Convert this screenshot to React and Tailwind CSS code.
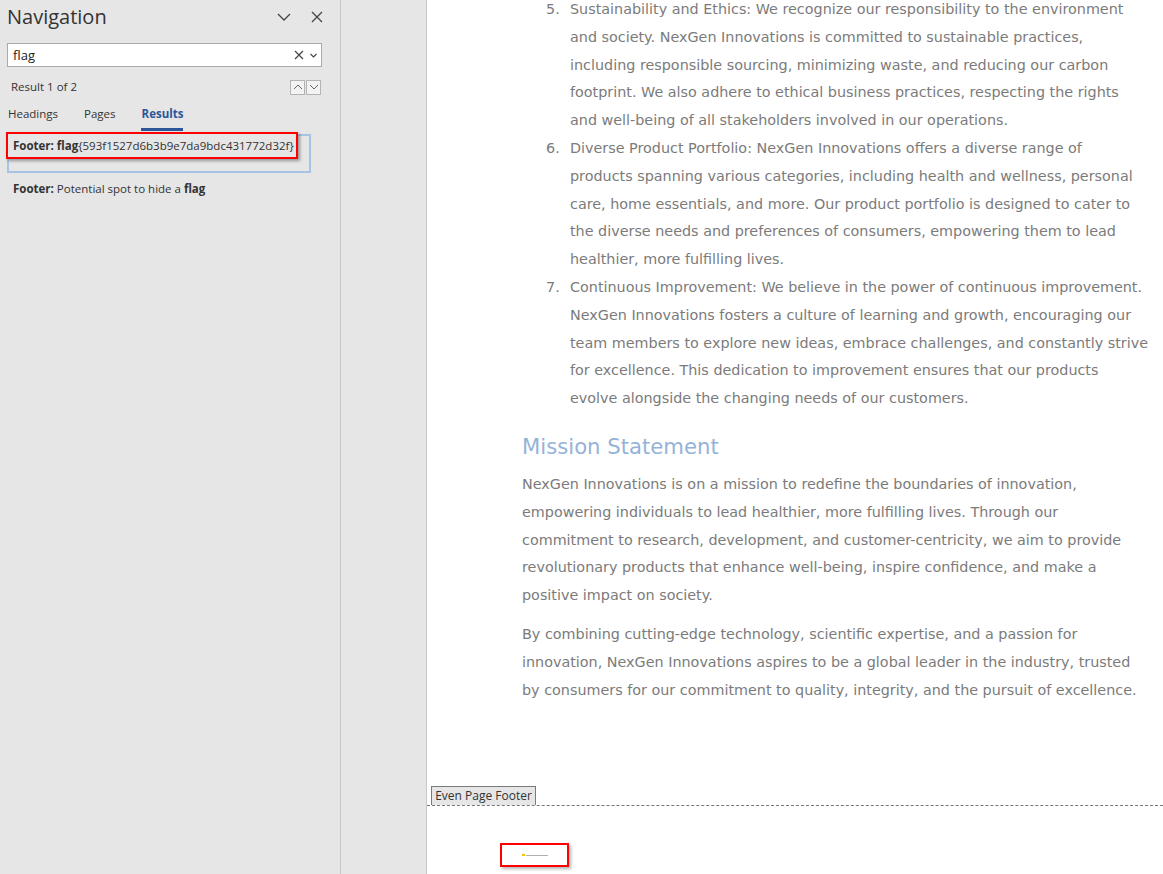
import React from "react";

const docFont = { fontFamily: '"DejaVu Sans", Verdana, sans-serif' };
const uiFont = { fontFamily: '"Open Sans", "Noto Sans", sans-serif' };

function Lines({ lines }) {
  return lines.map((l, i) => (
    <div key={i} className="h-[27.8px] leading-[27.8px] whitespace-nowrap">
      {l}
    </div>
  ));
}

const items = [
  {
    n: "5.",
    lines: [
      "Sustainability and Ethics: We recognize our responsibility to the environment",
      "and society. NexGen Innovations is committed to sustainable practices,",
      "including responsible sourcing, minimizing waste, and reducing our carbon",
      "footprint. We also adhere to ethical business practices, respecting the rights",
      "and well-being of all stakeholders involved in our operations.",
    ],
  },
  {
    n: "6.",
    lines: [
      "Diverse Product Portfolio: NexGen Innovations offers a diverse range of",
      "products spanning various categories, including health and wellness, personal",
      "care, home essentials, and more. Our product portfolio is designed to cater to",
      "the diverse needs and preferences of consumers, empowering them to lead",
      "healthier, more fulfilling lives.",
    ],
  },
  {
    n: "7.",
    lines: [
      "Continuous Improvement: We believe in the power of continuous improvement.",
      "NexGen Innovations fosters a culture of learning and growth, encouraging our",
      "team members to explore new ideas, embrace challenges, and constantly strive",
      "for excellence. This dedication to improvement ensures that our products",
      "evolve alongside the changing needs of our customers.",
    ],
  },
];

export default function App() {
  return (
    <div className="flex h-[874px] w-[1163px] overflow-hidden bg-[#e6e6e6]">
      {/* Navigation pane */}
      <div
        className="relative w-[341px] shrink-0 border-r border-[#c8c8c8] bg-[#e6e6e6] text-[#333]"
        style={uiFont}
      >
        <div className="flex h-[34px] items-center pl-[7px] pr-[17px]">
          <div className="flex-1 text-[20px] leading-none text-[#333]">Navigation</div>
          <svg width="14" height="10" viewBox="0 0 14 10" className="mr-[20px]">
            <path d="M1 2 L7 8 L13 2" stroke="#444" strokeWidth="1.3" fill="none" />
          </svg>
          <svg width="12" height="12" viewBox="0 0 12 12">
            <path d="M1 1 L11 11 M11 1 L1 11" stroke="#444" strokeWidth="1.3" />
          </svg>
        </div>
        <div className="mx-[7px] mt-[9px] flex h-[24px] w-[315px] items-center border border-[#ababab] bg-white pl-[5px] pr-[3px]">
          <div className="flex-1 text-[13px] leading-none text-[#222]">flag</div>
          <svg width="10" height="10" viewBox="0 0 10 10" className="mr-[6px]">
            <path d="M1 1 L9 9 M9 1 L1 9" stroke="#444" strokeWidth="1.2" />
          </svg>
          <svg width="7" height="5" viewBox="0 0 7 5" className="mr-[1px]">
            <path d="M0.5 1 L3.5 4 L6.5 1" stroke="#444" strokeWidth="1.1" fill="none" />
          </svg>
        </div>
        <div className="mt-[12px] flex h-[16px] items-center pl-[11px] pr-[19px]">
          <div className="flex-1 text-[11.5px] leading-none text-[#333]">Result 1 of 2</div>
          <div className="mr-[1px] flex h-[15px] w-[15px] items-center justify-center border border-[#b4b4b4] bg-[#f3f3f3]">
            <svg width="10" height="6" viewBox="0 0 10 6">
              <path d="M1 5 L5 1 L9 5" stroke="#666" strokeWidth="1" fill="none" />
            </svg>
          </div>
          <div className="flex h-[15px] w-[15px] items-center justify-center border border-[#b4b4b4] bg-[#f3f3f3]">
            <svg width="10" height="6" viewBox="0 0 10 6">
              <path d="M1 1 L5 5 L9 1" stroke="#666" strokeWidth="1" fill="none" />
            </svg>
          </div>
        </div>
        <div className="mt-[11px] flex h-[25px] items-start text-[11.5px] leading-[16px]">
          <div className="ml-[8px] text-[#333]">Headings</div>
          <div className="ml-[26px] text-[#333]">Pages</div>
          <div className="ml-[25px] flex flex-col items-center">
            <div className="px-[1px] font-bold text-[#2b579a]">Results</div>
            <div className="mt-[6px] h-[3px] w-[42px] bg-[#2b579a]"></div>
          </div>
        </div>
        <div className="mx-[7px] mt-[3px] h-[39px] w-[304px] border-2 border-[#a9c3e6] bg-[#e6e6e6]"></div>
        <div className="mt-[10px] whitespace-nowrap pl-[13px] text-[11.5px] leading-none text-[#333]">
          <span className="font-bold">Footer:</span> Potential spot to hide a <span className="font-bold">flag</span>
        </div>
        {/* red annotation box over the first result */}
        <div className="absolute left-[6px] top-[132px] flex h-[27px] w-[292px] items-center whitespace-nowrap border-2 border-[#ff0000] bg-[#e6e6e6] pl-[5px] pt-[1px] text-[11.5px] leading-none text-[#333] shadow-[2px_2px_3px_rgba(0,0,0,0.35)]">
          <span className="font-bold">Footer: flag</span>
          <span>{"{593f1527d6b3b9e7da9bdc431772d32f}"}</span>
        </div>
      </div>

      {/* gray gutter */}
      <div className="w-[86px] shrink-0 border-r border-[#c8c8c8] bg-[#e6e6e6]"></div>

      {/* Page */}
      <div className="relative flex-1 bg-white">
        <div className="text-[14.35px] text-[#7b7b7b]" style={docFont}>
          <div className="-mt-[4px]">
            {items.map((it) => (
              <div key={it.n} className="flex">
                <div className="h-[27.8px] w-[143px] shrink-0 pl-[119px] leading-[27.8px]">{it.n}</div>
                <div>
                  <Lines lines={it.lines} />
                </div>
              </div>
            ))}
          </div>
          <div className="mt-[17px] pl-[95px] text-[21.2px] leading-[34px] text-[#95b3d7]">
            Mission Statement
          </div>
          <div className="mt-[7px] pl-[95px]">
            <Lines
              lines={[
                "NexGen Innovations is on a mission to redefine the boundaries of innovation,",
                "empowering individuals to lead healthier, more fulfilling lives. Through our",
                "commitment to research, development, and customer-centricity, we aim to provide",
                "revolutionary products that enhance well-being, inspire confidence, and make a",
                "positive impact on society.",
              ]}
            />
          </div>
          <div className="mt-[11px] pl-[95px]">
            <Lines
              lines={[
                "By combining cutting-edge technology, scientific expertise, and a passion for",
                "innovation, NexGen Innovations aspires to be a global leader in the industry, trusted",
                "by consumers for our commitment to quality, integrity, and the pursuit of excellence.",
              ]}
            />
          </div>
        </div>

        {/* footer area */}
        <div className="absolute left-0 right-0 top-[786px]">
          <div
            className="ml-[4px] flex h-[19px] w-[105px] items-center justify-center border border-b-0 border-[#7a7a7a] bg-[#e6e6e6] text-[12px] leading-none text-[#333]"
            style={uiFont}
          >
            Even Page Footer
          </div>
          <div className="border-t border-dashed border-[#777]"></div>
          <div className="ml-[73px] mt-[37px] flex h-[24px] w-[69px] items-center border-2 border-[#ff0000] bg-white pl-[20px] shadow-[2px_2px_3px_rgba(0,0,0,0.3)]">
            <div className="h-[2px] w-[3px] bg-[#f2c500]"></div>
            <div className="ml-[1px] h-[1px] w-[22px] bg-[#b0b0b0]"></div>
          </div>
        </div>
      </div>
    </div>
  );
}
